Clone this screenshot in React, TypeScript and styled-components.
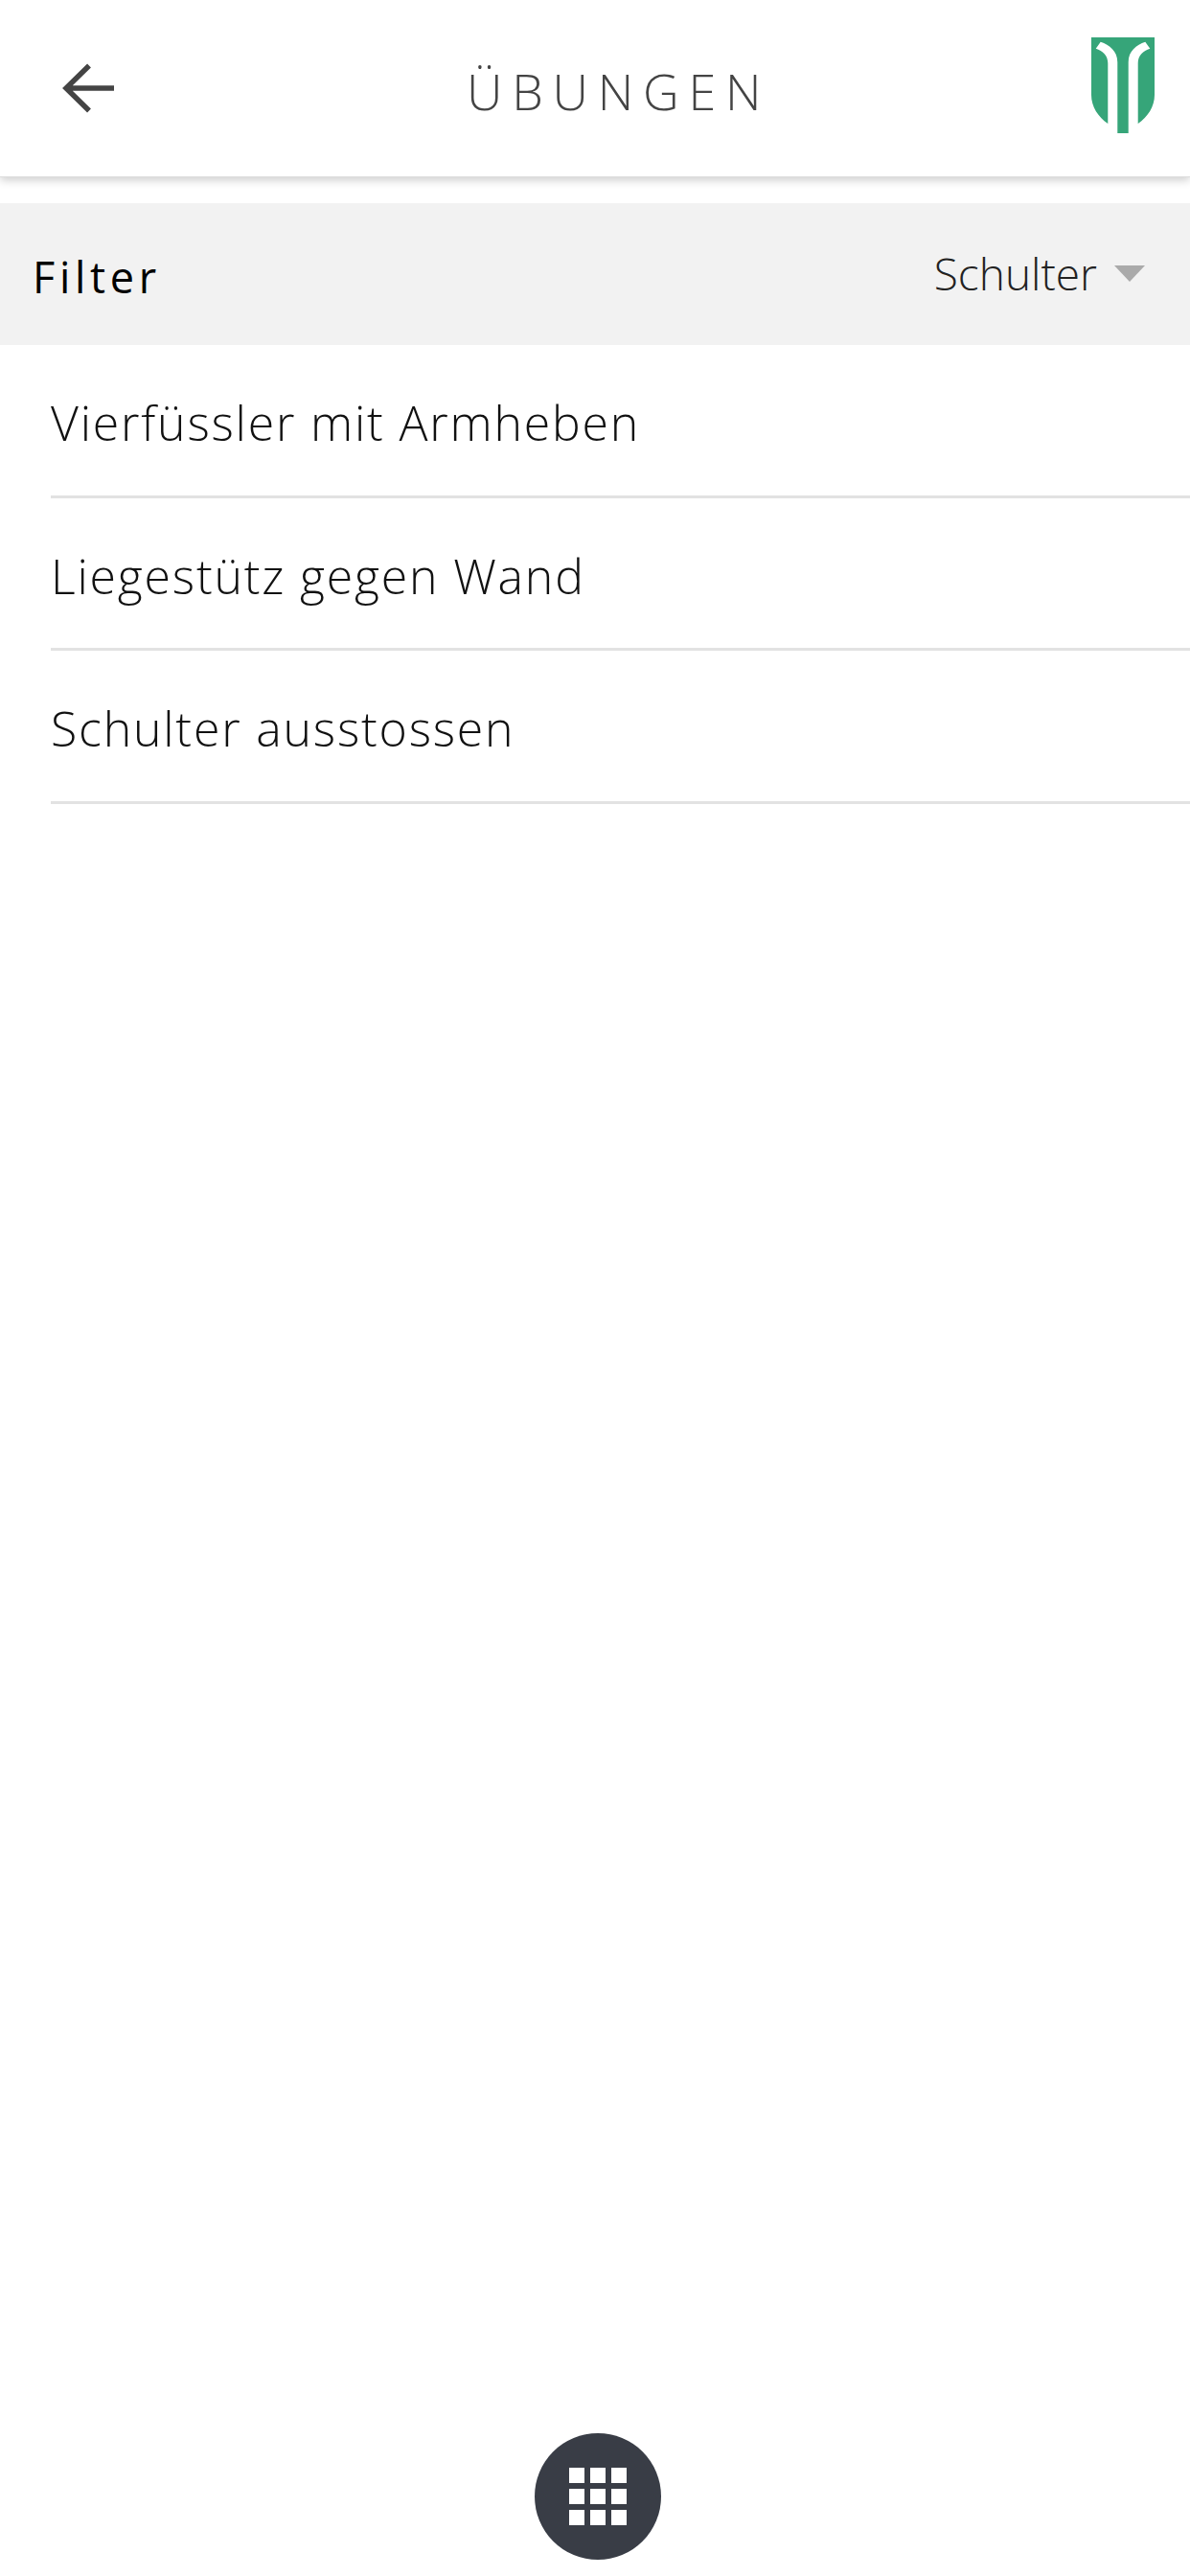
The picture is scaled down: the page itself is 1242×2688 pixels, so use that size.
import React from "react";
import styled, { createGlobalStyle } from "styled-components";

const GlobalStyle = createGlobalStyle`
    html, body {
        margin: 0;
        padding: 0;
        background: #ffffff;
    }
    body {
        font-family: "Open Sans", "Noto Sans", sans-serif;
    }
`;

const exercises = ["Vierfüssler mit Armheben", "Liegestütz gegen Wand", "Schulter ausstossen"];

const App: React.FC = () => {
    return (
        <Page>
            <GlobalStyle />
            <Header>
                <BackButton aria-label="Zurück">
                    <svg width="55" height="52" viewBox="0 0 55 52" fill="none">
                        <path d="M54 26H5M28 2.500L4 26l24 23.500" stroke="#444444" strokeWidth="5.500" />
                    </svg>
                </BackButton>
                <Title>ÜBUNGEN</Title>
                <Logo width="66" height="100" viewBox="0 0 66 100">
                    <path
                        d="M0 0H66V60C66 72 59 83 48.700 90H38.700V100H27.300V90H17.300C7 83 0 72 0 60Z"
                        fill="#36a579"
                    />
                    <path
                        d="M4.700 11.700L9.700 4.700C19 8 27.300 14 27.300 26V90H17.300V27C17.300 19 12 14 4.700 11.700Z"
                        fill="#ffffff"
                    />
                    <path
                        d="M61.300 11.700L56.300 4.700C47 8 38.700 14 38.700 26V90H48.700V27C48.700 19 54 14 61.300 11.700Z"
                        fill="#ffffff"
                    />
                </Logo>
            </Header>
            <FilterBar>
                <FilterLabel>Filter</FilterLabel>
                <FilterSelect>
                    <FilterValue>Schulter</FilterValue>
                    <Caret />
                </FilterSelect>
            </FilterBar>
            <List>
                {exercises.map((name) => (
                    <Row key={name}>{name}</Row>
                ))}
            </List>
            <Footer>
                <MenuButton aria-label="Menü">
                    <MenuGrid>
                        {Array.from({ length: 9 }).map((_, i) => (
                            <MenuDot key={i} />
                        ))}
                    </MenuGrid>
                </MenuButton>
            </Footer>
        </Page>
    );
};

const Page = styled.div`
    display: flex;
    flex-direction: column;
    height: 2688px;
    overflow: hidden;
    background: #ffffff;
`;

const Header = styled.header`
    display: flex;
    align-items: center;
    height: 185px;
    box-sizing: border-box;
    padding: 0 37px 0 65px;
    border-bottom: 1px solid #dddddd;
    box-shadow: 0 3px 9px rgba(0, 0, 0, 0.2);
`;

const BackButton = styled.div`
    display: flex;
    width: 55px;
    height: 52px;
    margin-right: 367px;
`;

const Title = styled.h1`
    flex: 1;
    margin: 4px 0 0;
    font-size: 52px;
    font-weight: 300;
    letter-spacing: 9.800px;
    color: #444444;
    white-space: nowrap;
`;

const Logo = styled.svg`
    display: block;
    margin-bottom: 6px;
`;

const FilterBar = styled.div`
    display: flex;
    align-items: center;
    justify-content: space-between;
    height: 148px;
    margin-top: 27px;
    padding: 0 47px 0 34px;
    background: #f2f2f2;
`;

const FilterLabel = styled.span`
    margin-top: 5px;
    font-size: 45px;
    font-weight: 500;
    letter-spacing: 4.700px;
    color: #000000;
`;

const FilterSelect = styled.div`
    display: flex;
    align-items: center;
    gap: 18px;
    margin-bottom: 2px;
`;

const FilterValue = styled.span`
    font-size: 46px;
    font-weight: 300;
    color: #222222;
`;

const Caret = styled.span`
    width: 0;
    height: 0;
    border-left: 16px solid transparent;
    border-right: 16px solid transparent;
    border-top: 17px solid #aaaaaa;
`;

const List = styled.div`
    display: flex;
    flex-direction: column;
`;

const Row = styled.div`
    display: flex;
    align-items: center;
    height: 159.5px;
    box-sizing: border-box;
    margin-left: 53px;
    padding-top: 6px;
    border-bottom: 3px solid #e2e2e2;
    font-size: 50px;
    font-weight: 300;
    letter-spacing: 1.800px;
    color: #111111;
`;

const Footer = styled.div`
    display: flex;
    justify-content: center;
    margin-top: auto;
    padding: 0 0 17px 5px;
`;

const MenuButton = styled.div`
    display: flex;
    align-items: center;
    justify-content: center;
    width: 132px;
    height: 132px;
    border-radius: 50%;
    background: #393d46;
`;

const MenuGrid = styled.div`
    display: grid;
    grid-template-columns: repeat(3, 16px);
    grid-auto-rows: 16px;
    gap: 6px;
`;

const MenuDot = styled.span`
    background: #ffffff;
`;

export default App;
